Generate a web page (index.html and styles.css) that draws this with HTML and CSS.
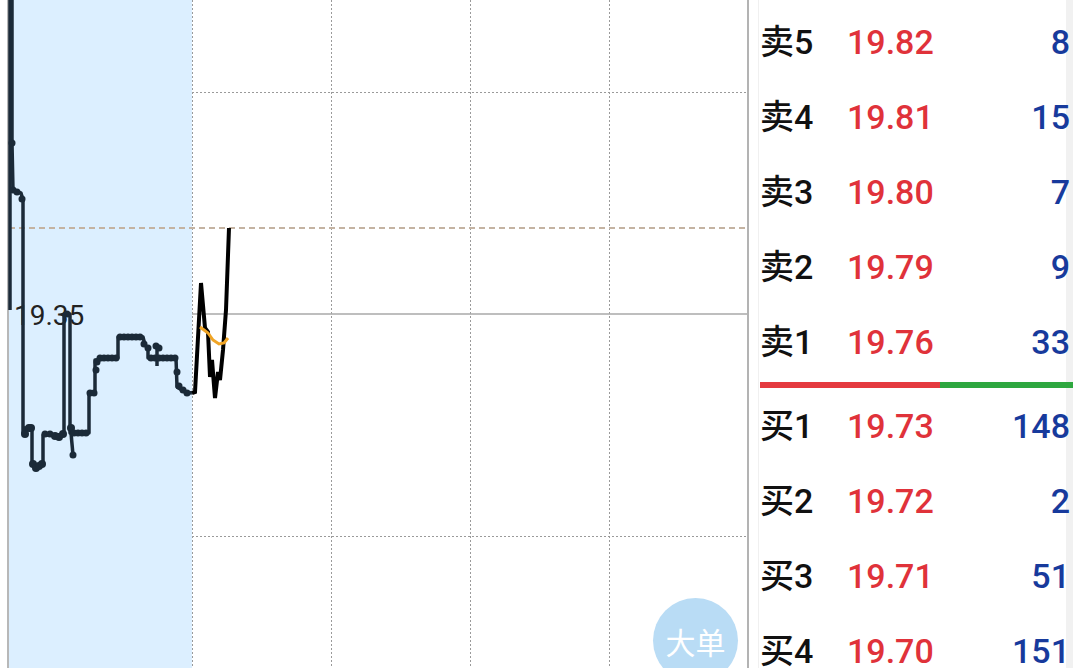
FILE: index.html
```html
<!DOCTYPE html>
<html lang="zh-CN">
<head>
<meta charset="utf-8">
<title>分时盘口</title>
<link rel="stylesheet" href="styles.css">
</head>
<body>
<div class="app">
  <div class="chart">
    <svg class="chart-svg" viewBox="0 0 747 668" width="747" height="668">
      <rect x="0" y="0" width="747" height="668" fill="#ffffff"/>
      <rect x="9" y="0" width="183" height="668" fill="#dcefff"/>
      <line x1="8" y1="0" x2="8" y2="668" stroke="#b8b8b8" stroke-width="2"/>
      <g stroke="#9a9a9a" stroke-width="1" stroke-dasharray="2,2">
        <line x1="192.5" y1="0" x2="192.5" y2="668"/>
        <line x1="331.5" y1="0" x2="331.5" y2="668"/>
        <line x1="470.5" y1="0" x2="470.5" y2="668"/>
        <line x1="609.5" y1="0" x2="609.5" y2="668"/>
        <line x1="192" y1="92.5" x2="747" y2="92.5"/>
        <line x1="192" y1="536.5" x2="747" y2="536.5"/>
      </g>
      <line x1="9" y1="228" x2="747" y2="228" stroke="#c4b3a2" stroke-width="2" stroke-dasharray="6,4"/>
      <line x1="192" y1="314" x2="747" y2="314" stroke="#a8a8a8" stroke-width="1.5"/>
      <text x="14" y="325" class="axis-label">19.35</text>
      <g fill="none" stroke="#1b2a38" stroke-width="3.5" stroke-linejoin="round">
        <path d="M10,0 L10,310"/>
        <path d="M12,0 L12,143 L13,190 L17,192 L21,193 L23,200 L23,433 L25,433 L25,428 L32,428 L32,465 L43,465 L43,435 L55,435 L63,435 L64,435 L64,314 L67,314 L70,314 L70,433 L89,433 L89,393 L95,393 L95,360 L118,358 L118,337 L143,337 L145,345 L148,348 L148,358 L176,358 L177,387 L185,392 L192,393"/>
        <path d="M71,433 L73,455"/>
        <path d="M157,345 L157,366"/>
      </g>
      <g fill="#1b2a38">
        <circle cx="12" cy="143" r="3.5"/><circle cx="13" cy="190" r="3.5"/><circle cx="17" cy="192" r="3.5"/><circle cx="22" cy="199" r="3.5"/>
        <circle cx="25" cy="434" r="4"/><circle cx="29" cy="428" r="4"/><circle cx="31" cy="428" r="4"/>
        <circle cx="33" cy="464" r="4"/><circle cx="36" cy="468" r="4"/><circle cx="39" cy="466" r="4"/><circle cx="42" cy="464" r="4"/>
        <circle cx="45" cy="434" r="3.5"/><circle cx="50" cy="434" r="3.5"/><circle cx="55" cy="436" r="4"/><circle cx="59" cy="437" r="4"/><circle cx="63" cy="434" r="4"/>
        <circle cx="67" cy="314" r="3.5"/><circle cx="71" cy="428" r="4"/><circle cx="73" cy="455" r="3.5"/>
        <circle cx="74" cy="433" r="3.5"/><circle cx="78" cy="433" r="3.5"/><circle cx="82" cy="433" r="3.5"/><circle cx="86" cy="433" r="3.5"/>
        <circle cx="90" cy="393" r="3.5"/><circle cx="94" cy="393" r="3.5"/><circle cx="96" cy="370" r="3.5"/><circle cx="97" cy="362" r="3.5"/>
        <circle cx="100" cy="358" r="3.5"/><circle cx="104" cy="358" r="3.5"/><circle cx="108" cy="358" r="3.5"/><circle cx="112" cy="358" r="3.5"/><circle cx="116" cy="358" r="3.5"/>
        <circle cx="120" cy="337" r="3.5"/><circle cx="124" cy="337" r="3.5"/><circle cx="128" cy="337" r="3.5"/><circle cx="132" cy="337" r="3.5"/><circle cx="136" cy="337" r="3.5"/><circle cx="140" cy="337" r="3.5"/>
        <circle cx="144" cy="344" r="3.5"/><circle cx="148" cy="348" r="3.5"/>
        <circle cx="151" cy="358" r="3.5"/><circle cx="156" cy="346" r="3.5"/><circle cx="159" cy="348" r="3.5"/>
        <circle cx="155" cy="358" r="3.5"/><circle cx="159" cy="358" r="3.5"/><circle cx="163" cy="358" r="3.5"/><circle cx="167" cy="358" r="3.5"/><circle cx="171" cy="358" r="3.5"/><circle cx="175" cy="358" r="3.5"/>
        <circle cx="177" cy="372" r="3.5"/><circle cx="179" cy="386" r="3.5"/><circle cx="183" cy="390" r="3.5"/><circle cx="187" cy="393" r="3.5"/>
      </g>
      <path d="M192,393 L195,392 L201,283 L205,328 L208,332 L210,377 L212,360 L215,398 L218,372 L220,380 L223,350 L226,310 L229,228" fill="none" stroke="#000" stroke-width="4" stroke-linejoin="miter"/>
      <path d="M200,327 L204,330 L208,333 L213,340 L219,344 L224,343 L228,338" fill="none" stroke="#f0a526" stroke-width="3"/>
    </svg>
    <div class="big-order">大单</div>
  </div>
  <div class="panel">
    <div class="book">
      <div class="row"><span class="lbl">卖5</span><span class="price">19.82</span><span class="qty">8</span></div>
      <div class="row"><span class="lbl">卖4</span><span class="price">19.81</span><span class="qty">15</span></div>
      <div class="row"><span class="lbl">卖3</span><span class="price">19.80</span><span class="qty">7</span></div>
      <div class="row"><span class="lbl">卖2</span><span class="price">19.79</span><span class="qty">9</span></div>
      <div class="row"><span class="lbl">卖1</span><span class="price">19.76</span><span class="qty">33</span></div>
      <div class="ratio"><div class="ratio-sell"></div><div class="ratio-buy"></div></div>
      <div class="row"><span class="lbl">买1</span><span class="price">19.73</span><span class="qty">148</span></div>
      <div class="row"><span class="lbl">买2</span><span class="price">19.72</span><span class="qty">2</span></div>
      <div class="row"><span class="lbl">买3</span><span class="price">19.71</span><span class="qty">51</span></div>
      <div class="row"><span class="lbl">买4</span><span class="price">19.70</span><span class="qty">151</span></div>
    </div>
  </div>
</div>
</body>
</html>
```
FILE: styles.css
```css
html, body {
  margin: 0;
  padding: 0;
  background: #ffffff;
  overflow: hidden;
}
body {
  font-family: Roboto, "Noto Sans CJK SC", sans-serif;
}
.app {
  display: flex;
  width: 1080px;
  height: 668px;
  overflow: hidden;
}
.chart {
  position: relative;
  width: 747px;
  height: 668px;
  flex: none;
  border-right: 2px solid #b3b3b3;
}
.chart-svg {
  display: block;
}
.axis-label {
  font-family: Roboto, sans-serif;
  font-size: 28px;
  fill: #222222;
}
.big-order {
  position: absolute;
  left: 653px;
  top: 598px;
  width: 85px;
  height: 85px;
  border-radius: 50%;
  background: #b9dcf5;
  color: #ffffff;
  font-family: "Noto Sans CJK SC", sans-serif;
  font-size: 30px;
  display: flex;
  align-items: center;
  justify-content: center;
  line-height: 1;
}
.panel {
  flex: 1;
  height: 668px;
  padding-left: 9px;
  box-sizing: border-box;
}
.book {
  width: 315px;
  height: 668px;
  padding: 5px 3px 0 1px;
  box-sizing: border-box;
  background: linear-gradient(to right, #ffffff 0, #ffffff 307px, #f1f1f1 307px, #f1f1f1 315px);
  border-left: 1px solid #f0f0f0;
}
.row {
  display: flex;
  align-items: center;
  height: 75px;
  font-size: 34px;
  font-weight: 500;
  line-height: 75px;
  white-space: nowrap;
}
.lbl {
  width: 87px;
  color: #111111;
  font-family: Roboto, "Noto Sans CJK SC", sans-serif;
}
.price {
  color: #e0323a;
}
.qty {
  margin-left: auto;
  color: #173a9c;
}
.ratio {
  display: flex;
  height: 6px;
  margin: 2px -3px 1px 0;
}
.ratio-sell {
  width: 180px;
  background: #e53a3f;
}
.ratio-buy {
  flex: 1;
  background: #2ea73f;
}
```
